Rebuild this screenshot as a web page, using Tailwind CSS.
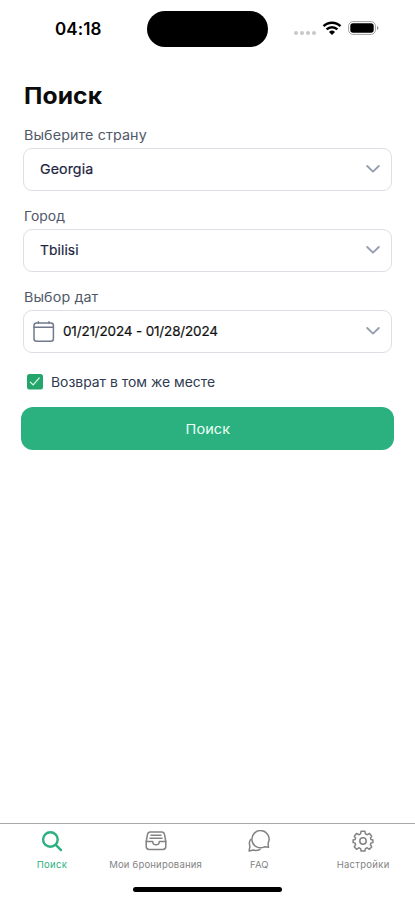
<!DOCTYPE html>
<html lang="ru">
<head>
<meta charset="utf-8">
<meta name="viewport" content="width=device-width, initial-scale=1">
<title>Поиск</title>
<script src="https://cdn.jsdelivr.net/npm/@tailwindcss/browser@4"></script>
</head>
<body class="bg-white font-['Inter','Noto_Sans',sans-serif]">
<div class="flex h-[900px] w-[415px] flex-col overflow-hidden bg-white">
  <header class="flex h-[58px] shrink-0 items-start">
    <div class="w-[147px] pt-[17px] pl-[55px] text-[17px] leading-[24px] font-semibold text-black"><span class="tracking-[0.1px]">04:18</span></div>
    <div class="mt-[11px] h-[36px] w-[121px] rounded-full bg-black"></div>
    <div class="mt-[20px] ml-[26px] flex items-start">
      <div class="mt-[11px] flex gap-[2px]">
        <i class="size-[4px] rounded-full bg-[#c8c8c8]"></i><i class="size-[4px] rounded-full bg-[#c8c8c8]"></i><i class="size-[4px] rounded-full bg-[#c8c8c8]"></i><i class="size-[4px] rounded-full bg-[#c8c8c8]"></i>
      </div>
      <svg class="ml-[6px] h-[16px] w-[20px]" viewBox="0 0 20 16" fill="none" stroke="#000" stroke-width="2.5"><path d="M1.5 6.2a12.1 12.1 0 0 1 17 0M4.6 9.4a7.7 7.7 0 0 1 10.8 0"/><path d="M7 12a4.3 4.3 0 0 1 6 0l-3 3z" fill="#000" stroke="none"/></svg>
      <svg class="mt-[1px] ml-[6px] h-[14px] w-[31px]" viewBox="0 0 31 14"><rect x=".6" y=".6" width="26.8" height="12.8" rx="4.2" fill="none" stroke="#a0a0a0"/><rect x="2.3" y="2.3" width="23.4" height="9.4" rx="2.7"/><path d="M29 5v4.2q1.5-.6 1.5-2.1T29 5" fill="#999"/></svg>
    </div>
  </header>

  <main class="flex flex-col pl-[24px]">
    <h1 class="mt-[22px] h-[32px] text-[23px] leading-[32px] font-bold text-[#0b0b0b]"><span class="inline-block origin-left scale-x-[1.07] tracking-[0.1px]">Поиск</span></h1>

    <label class="mt-[12px] h-[24px] text-[13.5px] leading-[22px] text-[#4f5868]"><span class="inline-block origin-left scale-x-[1.06] tracking-[0.1px]">Выберите страну</span></label>
    <div class="-ml-px flex h-[43px] w-[369px] items-center rounded-[9px] border border-[#dce0e4] pr-[11px] pl-[16px] text-[13.5px] text-[#1c2540]">
      <span class="inline-block origin-left scale-x-[1.05] tracking-[0.1px] [-webkit-text-stroke:0.2px_currentColor]">Georgia</span>
      <svg class="mb-[2px] ml-auto size-[14px]" viewBox="0 0 14 14" fill="none" stroke="#949db0" stroke-width="1.8" stroke-linecap="round" stroke-linejoin="round"><path d="M1.2 4 7 9.7 12.8 4"/></svg>
    </div>

    <label class="mt-[14px] h-[24px] text-[13.5px] leading-[23px] text-[#4f5868]"><span class="inline-block origin-left scale-x-[1.03] tracking-[0px]">Город</span></label>
    <div class="-ml-px flex h-[43px] w-[369px] items-center rounded-[9px] border border-[#dce0e4] pr-[11px] pl-[16px] text-[13.5px] text-[#1c2540]">
      <span class="inline-block origin-left scale-x-[1.02] tracking-[0.1px] [-webkit-text-stroke:0.2px_currentColor]">Tbilisi</span>
      <svg class="mb-[2px] ml-auto size-[14px]" viewBox="0 0 14 14" fill="none" stroke="#949db0" stroke-width="1.8" stroke-linecap="round" stroke-linejoin="round"><path d="M1.2 4 7 9.7 12.8 4"/></svg>
    </div>

    <label class="mt-[14px] h-[24px] text-[13.5px] leading-[23px] text-[#4f5868]"><span class="inline-block origin-left scale-x-[1.06] tracking-[0.1px]">Выбор дат</span></label>
    <div class="-ml-px flex h-[43px] w-[369px] items-center rounded-[9px] border border-[#dce0e4] pr-[11px] pl-[9px] text-[13.5px] text-[#111]">
      <svg class="mr-[8px] size-[22px]" viewBox="0 0 22 22" fill="none" stroke="#70798c" stroke-width="1.5" stroke-linecap="round"><rect x="1" y="2" width="19.4" height="18.3" rx="2.5"/><path d="M1 6.3h19.4M5.4 .8v1.2M16 .8v1.2"/></svg>
      <span class="tracking-[-0.16px] [-webkit-text-stroke:0.2px_currentColor]">01/21/2024 - 01/28/2024</span>
      <svg class="mb-[2px] ml-auto size-[14px]" viewBox="0 0 14 14" fill="none" stroke="#949db0" stroke-width="1.8" stroke-linecap="round" stroke-linejoin="round"><path d="M1.2 4 7 9.7 12.8 4"/></svg>
    </div>

    <div class="mt-[19px] ml-[3px] flex h-[20px] items-center text-[13.5px] text-[#303a50]">
      <svg class="mr-[8px] size-[16px]" viewBox="0 0 16 16"><rect width="16" height="15.5" rx="2.5" fill="#24a56b"/><path d="m3.4 8.2 2.8 2.7 6-6.9" fill="none" stroke="#d5f5e5" stroke-width="1.2" stroke-linecap="round"/></svg>
      <span class="inline-block origin-left scale-x-[1.03] tracking-[0px]">Возврат в том же месте</span>
    </div>

    <button class="mt-[15px] -ml-[3px] flex h-[43px] w-[373px] items-center justify-center rounded-[12px] bg-[#2bb180] pt-px text-[13.5px] text-[#effff8]"><span class="inline-block scale-x-[1.07] tracking-[0.1px]">Поиск</span></button>
  </main>

  <nav class="mt-auto flex h-[77px] shrink-0 flex-col border-t border-[#a8a8a8]">
    <div class="grid grid-cols-4 text-[9.5px] leading-[12px] text-[#838383]">
      <div class="flex flex-col items-center pt-[6px] text-[#2bb180]">
        <svg class="size-[22px]" viewBox="0 0 22 22" fill="none" stroke="currentColor" stroke-width="2.4" stroke-linecap="round"><circle cx="9.4" cy="9.5" r="7.3"/><path d="m14.8 14.9 5.2 5.2"/></svg>
        <span class="mt-[7px] tracking-[0.3px]">Поиск</span>
      </div>
      <div class="flex flex-col items-center pt-[6px]">
        <svg class="size-[22px]" viewBox="0 0 22 22" fill="none" stroke="currentColor" stroke-width="1.5" stroke-linecap="round" stroke-linejoin="round"><path d="M1.2 11.5 2.5 4.4Q3 2 5.2 2h11.6q2.200 0 2.700 2.400L20.800 11.5v5q0 2.900-2.900 2.900H4.100Q1.200 19.400 1.200 16.500z"/><path d="M1.200 11.500H7.700a3.300 3.300 0 0 0 6.600 0h6.500M6 5.200h10M5 8.300h12"/></svg>
        <span class="mt-[7px] tracking-[0.2px] whitespace-nowrap">Мои бронирования</span>
      </div>
      <div class="flex flex-col items-center pt-[6px]">
        <svg class="size-[22px]" viewBox="0 0 22 22" fill="none" stroke="currentColor" stroke-width="1.5" stroke-linecap="round" stroke-linejoin="round"><path d="M20.500 17.300 20.100 13.200A8.600 8.600 0 1 0 16.500 16.800z"/><path d="M2.500 9.600Q.600 12.500 1.900 16.300L1.100 20.900l4.300-.8Q9 21 12.100 19.300"/></svg>
        <span class="mt-[7px] tracking-[0.2px]">FAQ</span>
      </div>
      <div class="flex flex-col items-center pt-[6px]">
        <svg class="size-[22px]" viewBox="0 0 22 22" fill="none" stroke="currentColor" stroke-width="1.5" stroke-linejoin="round"><circle cx="11" cy="11" r="3.2"/><path d="M9.100 1.200h3.800l.5 2.700 1.800.8 2.300-1.200 2.200 2.800-1.300 1.800.5 1.400 2 .5v2.500l-2 .6-.5 1.500 1.300 2.100-2.200 2.600-2.300-1.500-1.800.8-.5 2.400H9.100l-.5-2.400-1.800-.8-2.300 1.500-2.200-2.600 1.300-2.100-.5-1.500-2-.6V10l2-.5.5-1.400-1.300-1.800 2.200-2.800 2.300 1.200 1.800-.8z"/></svg>
        <span class="mt-[7px] tracking-[0.3px]">Настройки</span>
      </div>
    </div>
    <div class="mx-auto mt-[16px] h-[5px] w-[149px] rounded-full bg-black"></div>
  </nav>
</div>
</body>
</html>
